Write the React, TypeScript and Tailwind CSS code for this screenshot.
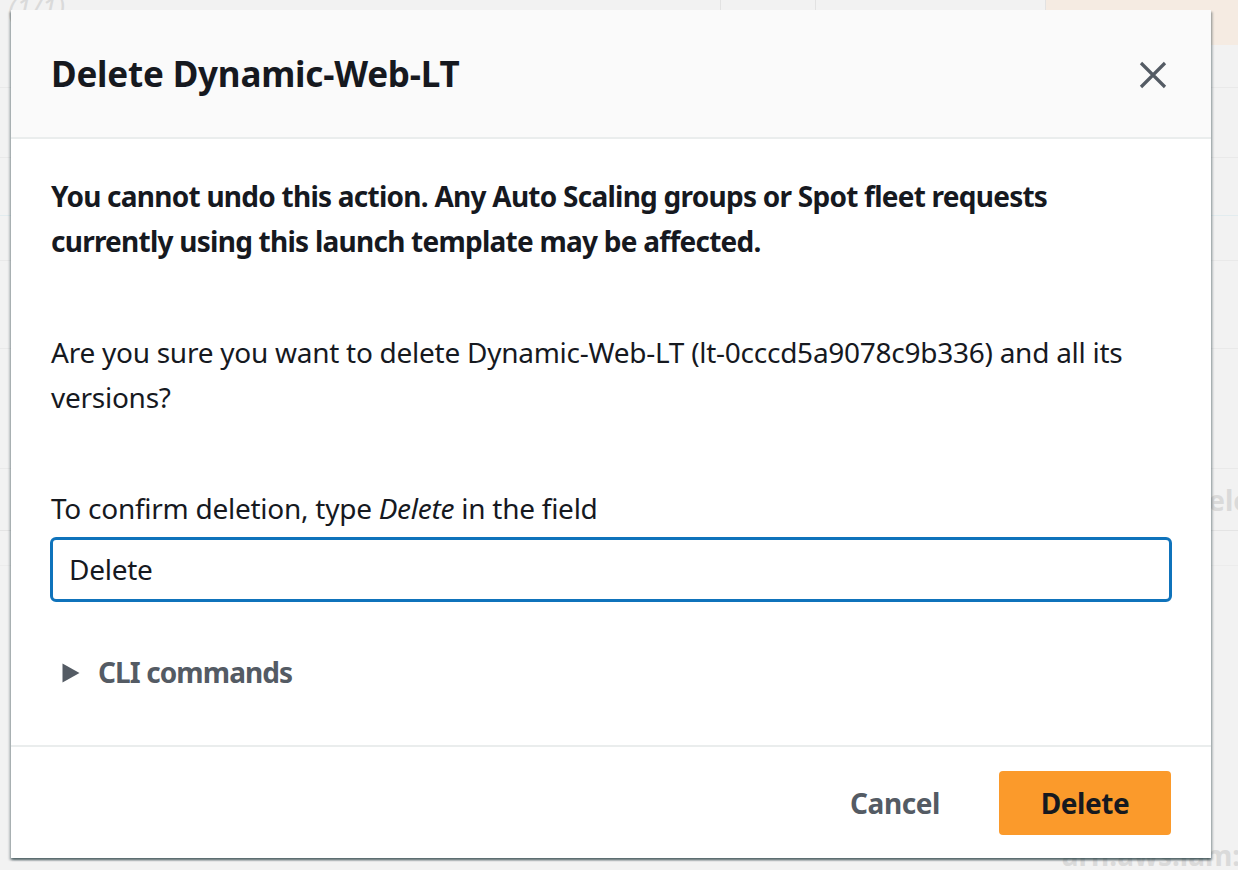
import React from "react"

const font = { fontFamily: '"Noto Sans", "Open Sans", Arial, sans-serif' }

function Backdrop() {
  // faded console page behind the modal
  return (
    <div className="flex h-full w-full flex-col text-[28px] text-[#dadada]">
      <div className="flex h-[45px] items-start">
        <span className="ml-[8px] mt-[-14px] italic">(1/1)</span>
        <div className="ml-auto flex h-full">
          <div className="w-[96px] border-x border-[#e2e2e2]" />
          <div className="w-[230px] border-r border-[#e2e2e2]" />
          <div className="w-[192px] bg-[#f5ebe2]" />
        </div>
      </div>
      <div className="h-[43px] border-b border-[#e9e9e9]" />
      <div className="h-[70px] border-b border-[#e9e9e9]" />
      <div className="h-[58px] border-b border-[#e2ecef]" />
      <div className="h-[45px] border-b border-[#e9e9e9]" />
      <div className="h-[88px] border-b border-[#e9e9e9]" />
      <div className="h-[120px] border-b border-[#e9e9e9]" />
      <div className="flex h-[62px] items-center justify-end border-b border-[#e4e4e4]">
        <span className="mr-[-12px] font-bold">ele</span>
      </div>
      <div className="h-[35px] border-b border-[#ececec]" />
      <div className="flex-1" />
      <div className="flex h-[30px] justify-end">
        <span className="mr-[-10px] mt-[-6px] font-bold">arn:aws:iam::</span>
      </div>
    </div>
  )
}

export default function App() {
  return (
    <div className="relative h-[870px] w-[1238px] overflow-hidden bg-[#f2f2f2]" style={font}>
      <Backdrop />

      {/* Modal */}
      <div className="absolute left-[11px] top-[10px] flex w-[1200px] flex-col bg-white text-[#16191f] shadow-[0_2px_2px_0_rgba(0,28,36,0.45),2px_2px_2px_0_rgba(0,28,36,0.2),-2px_2px_2px_0_rgba(0,28,36,0.2)]">
        {/* Header */}
        <div className="flex h-[129px] items-center justify-between border-b-2 border-[#eaeded] bg-[#fafafa] pl-[40px] pr-[44px]">
          <h1 className="text-[35px] font-bold leading-[44px] tracking-[-0.2px]">Delete Dynamic-Web-LT</h1>
          <svg width="28" height="28" viewBox="0 0 28 28" className="mt-[2px]">
            <path d="M2 2 L26 26 M26 2 L2 26" stroke="#545b64" strokeWidth="3.2" fill="none" />
          </svg>
        </div>

        {/* Body */}
        <div className="flex flex-col px-[39px] pb-[50px] pt-[35px] text-[28px] leading-[45px] tracking-[-0.26px]">
          <p className="pl-[1px] font-bold tracking-[-0.75px]">
            You cannot undo this action. Any Auto Scaling groups or Spot fleet requests currently using this launch
            template may be affected.
          </p>
          <p className="mt-[66px] pl-[1px]">
            Are you sure you want to delete Dynamic-Web-LT (lt-0cccd5a9078c9b336) and all its versions?
          </p>
          <label className="mt-[66px] pl-[1px]">
            To confirm deletion, type <i>Delete</i> in the field
          </label>
          <div className="mt-[6px] flex h-[65px] items-center rounded-[6px] border-[3px] border-[#0f73bb] px-[16px]">
            Delete
          </div>
          <div className="mt-[48px] flex items-center pl-[12px] font-bold tracking-[-0.9px] text-[#545b64]">
            <svg width="18" height="20" viewBox="0 0 18 20">
              <path d="M0.5 0.5 L17.5 10 L0.5 19.5 Z" fill="#545b64" />
            </svg>
            <span className="ml-[18px]">CLI commands</span>
          </div>
        </div>

        {/* Footer */}
        <div className="flex items-center justify-end border-t-2 border-[#eaeded] px-[40px] pb-[23px] pt-[24px] tracking-[-0.4px]">
          <button className="mr-[29px] h-[64px] px-[30px] text-[28px] font-bold text-[#545b64]">Cancel</button>
          <button className="h-[64px] w-[172px] rounded-[4px] bg-[#fb9a2b] text-[28px] font-bold text-[#16191f]">
            Delete
          </button>
        </div>
      </div>
    </div>
  )
}
